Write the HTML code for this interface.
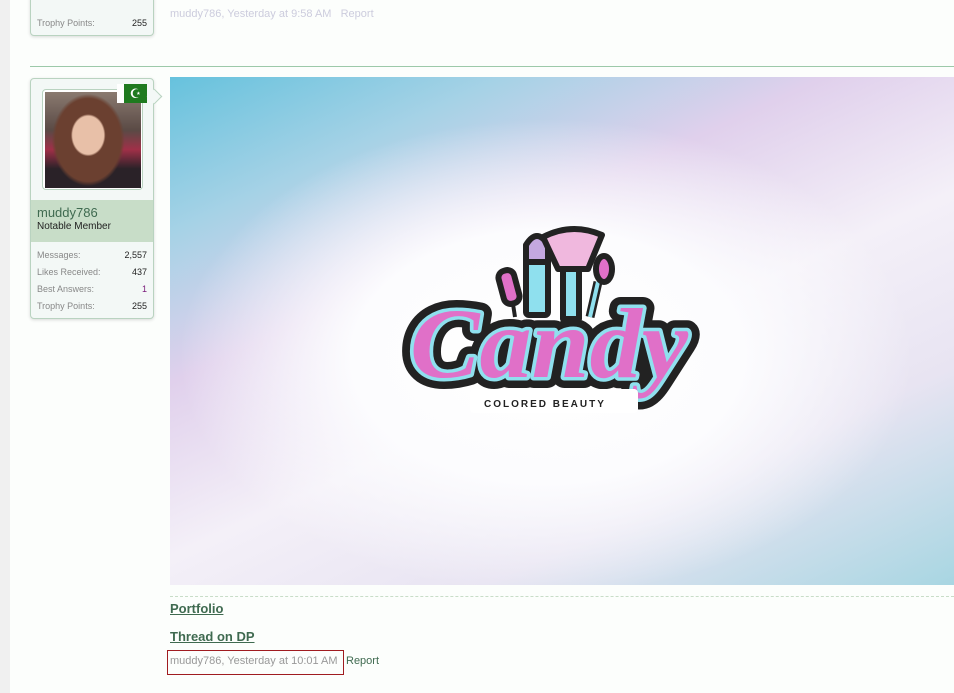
<!DOCTYPE html>
<html><head><style>
body{margin:0;width:954px;height:693px;overflow:hidden;background:#fcfefc;font-family:"Liberation Sans","DejaVu Sans",sans-serif;position:relative}
.strip{position:absolute;left:0;top:0;width:10px;height:693px;background:#f0f0f0}
.card{position:absolute;left:30px;background:#f3f8f6;border:1px solid #b9d3c0;border-radius:4px;box-shadow:0 1px 3px rgba(0,0,0,.15)}
.row{display:flex;justify-content:space-between;font-size:9px;color:#888;padding:0 6px;height:17px;line-height:17px}
.row b{font-weight:normal;color:#222}
</style></head><body>
<div class="strip"></div>
<div class="card" style="top:-5px;width:122px;height:39px">
 <div class="row" style="margin-top:19px"><span>Trophy Points:</span><b>255</b></div>
</div>
<div style="position:absolute;left:170px;top:8px;font-size:11px;color:#ccd">muddy786, Yesterday at 9:58 AM &nbsp; Report</div>
<div style="position:absolute;left:30px;top:66px;width:924px;height:1px;background:#9cc9a9"></div>

<div class="card" style="top:78px;width:122px;height:239px;overflow:visible">
 <div style="position:absolute;left:11px;top:10px;width:99px;height:99px;border:1px solid #b9d3c0;border-radius:4px;background:#fff"></div>
 <div style="position:absolute;left:14px;top:13px;width:96px;height:96px;background:radial-gradient(ellipse 18% 22% at 45% 45%,#e8c0a8 0 90%,transparent 100%),radial-gradient(ellipse 38% 48% at 45% 50%,#6b4030 0 90%,transparent 100%),linear-gradient(180deg,#8a7a70 0%,#5a4a45 40%,#a03048 60%,#2a2228 80%)"></div>
 <div style="position:absolute;left:86px;top:5px;width:30px;height:19px;background:#fff"></div>
 <div style="position:absolute;left:93px;top:5px;width:23px;height:19px;background:#1f7a1f;color:#fff;font-size:13px;line-height:19px;text-align:center">☪</div>
 <div style="position:absolute;right:-7px;top:12px;width:10px;height:10px;background:#f3f8f6;border-right:1px solid #b9d3c0;border-top:1px solid #b9d3c0;transform:rotate(45deg)"></div>
 <div style="position:absolute;left:0;top:121px;width:122px;height:42px;background:#c8ddc8">
  <div style="padding:5px 6px 0;font-size:13px;color:#3f6a50">muddy786</div>
  <div style="padding:1px 6px;font-size:10px;color:#222">Notable Member</div>
 </div>
 <div style="position:absolute;top:168px;width:122px">
  <div class="row"><span>Messages:</span><b>2,557</b></div>
  <div class="row"><span>Likes Received:</span><b>437</b></div>
  <div class="row"><span>Best Answers:</span><b style="color:#7a1a7a">1</b></div>
  <div class="row"><span>Trophy Points:</span><b>255</b></div>
 </div>
</div>

<div style="position:absolute;left:170px;top:77px;width:784px;height:508px;overflow:hidden;background:radial-gradient(ellipse 55% 55% at 48% 55%,#fff 0%,#fcfcfe 45%,rgba(255,255,255,0) 85%),linear-gradient(155deg,#66c2dd 0%,#a6d2e6 18%,#e0d0ec 35%,#f4f0f8 55%,#e8e4f2 75%,#a8d6e2 100%)">
 <svg width="784" height="508" style="position:absolute;left:0;top:0">
  <g stroke="#222" stroke-width="6" stroke-linejoin="round">
   <rect x="356" y="168" width="22" height="70" rx="3" fill="#8fe0ee"/>
   <path d="M356 185 L356 168 Q367 150 378 168 L378 185Z" fill="#c4a8e0"/>
   <path d="M373 160 Q402 145 432 158 L418 192 L388 192Z" fill="#f0b8de"/>
   <rect x="393" y="192" width="16" height="50" fill="#8fe0ee"/>
   <path d="M420 240 L428 205" fill="none" stroke-width="9"/>
   <path d="M420 240 L428 205" fill="none" stroke="#8fe0ee" stroke-width="4"/>
   <ellipse cx="434" cy="192" rx="8" ry="13" fill="#e070c8"/>
   <path d="M345 240 L338 195" fill="none" stroke-width="4"/>
   <rect x="331" y="193" width="16" height="34" rx="7" fill="#e070c8" transform="rotate(-15 339 210)"/>
  </g>
  <text x="240" y="300" textLength="278" lengthAdjust="spacingAndGlyphs" font-family="Liberation Serif,serif" font-style="italic" font-weight="bold" font-size="100" fill="#222" stroke="#222" stroke-width="22" stroke-linejoin="round">Candy</text>
  <text x="240" y="300" textLength="278" lengthAdjust="spacingAndGlyphs" font-family="Liberation Serif,serif" font-style="italic" font-weight="bold" font-size="100" fill="#e070c8" stroke="#8fe0ee" stroke-width="7" stroke-linejoin="round" paint-order="stroke">Candy</text>
  <rect x="300" y="312" width="168" height="24" fill="#fff" rx="4"/>
  <text x="314" y="330" font-family="Liberation Sans,sans-serif" font-weight="bold" font-size="10" letter-spacing="2" fill="#222">COLORED BEAUTY</text>
 </svg>
</div>
<div style="position:absolute;left:170px;top:596px;width:784px;border-top:1px dashed #c8ddc8"></div>
<div style="position:absolute;left:170px;top:601px;font-size:13px;font-weight:bold;color:#3f6a50;text-decoration:underline">Portfolio</div>
<div style="position:absolute;left:170px;top:629px;font-size:13px;font-weight:bold;color:#3f6a50;text-decoration:underline">Thread on DP</div>
<div style="position:absolute;left:167px;top:650px;width:175px;height:23px;border:1px solid #a01c20"></div>
<div style="position:absolute;left:170px;top:655px;font-size:11px;color:#999">muddy786, Yesterday at 10:01 AM</div>
<div style="position:absolute;left:346px;top:655px;font-size:11px;color:#3f6a50">Report</div>
</body></html>
